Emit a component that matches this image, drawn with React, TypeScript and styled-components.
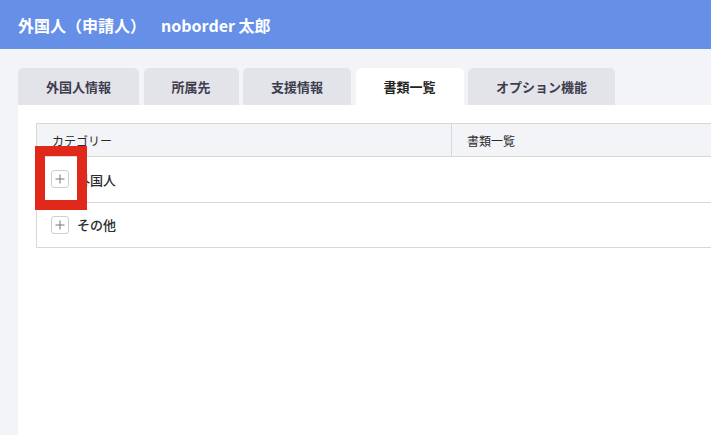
import styled, { createGlobalStyle } from "styled-components";

const GlobalStyle = createGlobalStyle`
  html, body {
    margin: 0;
    padding: 0;
    background: #f3f4f8;
    overflow: hidden;
  }
  body {
    font-family: "Noto Sans CJK JP", "Noto Sans", sans-serif;
    color: #333;
  }
`;

const Page = styled.div`
  position: relative;
  width: 711px;
  height: 435px;
  overflow: hidden;
  display: flex;
  flex-direction: column;
`;

const Header = styled.header`
  height: 49px;
  flex: none;
  display: flex;
  align-items: center;
  padding-left: 18px;
  background: #6690e8;
  color: #fff;
  font-size: 16px;
  font-weight: 700;
`;

const Name = styled.span`
  margin-left: 15px;
`;

const Main = styled.main`
  flex: 1;
  display: flex;
  flex-direction: column;
  padding: 19px 0 0 18px;
`;

const Tabs = styled.nav`
  display: flex;
  gap: 4.5px;
  height: 37px;
  flex: none;
`;

const Tab = styled.div<{ $active?: boolean }>`
  display: flex;
  align-items: center;
  justify-content: center;
  padding: 0 28px;
  border-radius: 5px 5px 0 0;
  background: ${(p) => (p.$active ? "#fff" : "#e3e3ea")};
  color: ${(p) => (p.$active ? "#222" : "#3d3d4d")};
  font-size: 13px;
  font-weight: 700;
  white-space: nowrap;
`;

const Panel = styled.section`
  flex: 1;
  width: 760px;
  background: #fff;
  padding: 18px;
`;

const Table = styled.div`
  width: 760px;
  border: 1px solid #d8d8d8;
`;

const HeadRow = styled.div`
  display: grid;
  grid-template-columns: 414px 1fr;
  height: 32px;
  background: #f3f4f8;
  border-bottom: 1px solid #d8d8d8;
  font-size: 12px;
  color: #2a2a2a;
`;

const HeadCell = styled.div<{ $divider?: boolean }>`
  display: flex;
  align-items: center;
  padding-left: 15px;
  border-left: ${(p) => (p.$divider ? "1px solid #d8d8d8" : "none")};
`;

const Row = styled.div<{ $last?: boolean }>`
  display: flex;
  align-items: center;
  gap: 8px;
  height: 44.5px;
  padding-left: 14px;
  border-bottom: ${(p) => (p.$last ? "none" : "1px solid #d8d8d8")};
  font-size: 13px;
  font-weight: 500;
  color: #2a2a2a;
`;

const PlusBox = styled.span`
  width: 16px;
  height: 16px;
  border: 1px solid #cfcfcf;
  border-radius: 3px;
  display: flex;
  align-items: center;
  justify-content: center;
  flex: none;
`;

const Highlight = styled.div`
  position: absolute;
  left: 35px;
  top: 146px;
  width: 32px;
  height: 44px;
  border: 10px solid #e0291a;
`;

const Plus = () => (
  <PlusBox>
    <svg width="10" height="10" viewBox="0 0 10 10">
      <path d="M5 0.5v9M0.5 5h9" stroke="#777" strokeWidth="1" />
    </svg>
  </PlusBox>
);

const tabs = ["外国人情報", "所属先", "支援情報", "書類一覧", "オプション機能"];
const categories = ["外国人", "その他"];

export default function App() {
  return (
    <Page>
      <GlobalStyle />
      <Header>
        外国人（申請人）<Name>noborder 太郎</Name>
      </Header>
      <Main>
        <Tabs>
          {tabs.map((t) => (
            <Tab key={t} $active={t === "書類一覧"}>
              {t}
            </Tab>
          ))}
        </Tabs>
        <Panel>
          <Table>
            <HeadRow>
              <HeadCell>カテゴリー</HeadCell>
              <HeadCell $divider>書類一覧</HeadCell>
            </HeadRow>
            {categories.map((c, i) => (
              <Row key={c} $last={i === categories.length - 1}>
                <Plus />
                {c}
              </Row>
            ))}
          </Table>
        </Panel>
      </Main>
      <Highlight />
    </Page>
  );
}
